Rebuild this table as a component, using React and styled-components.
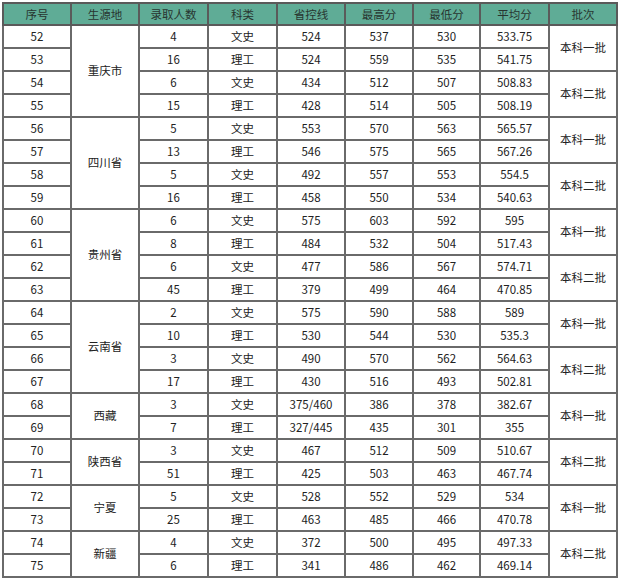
import styled, { createGlobalStyle } from 'styled-components'

const GlobalStyle = createGlobalStyle`
  body {
    margin: 0;
    background: #fff;
    font-family: "Noto Sans CJK SC", "Noto Sans", sans-serif;
  }
`

const Page = styled.div`
  padding: 2px 0 0 2px;
  width: 621px;
  height: 582px;
  box-sizing: border-box;
`

const Table = styled.table`
  border-collapse: collapse;
  table-layout: fixed;
  width: 614px;
  font-size: 11.5px;
  color: #222;
`

const Head = styled.th`
  background: #5fac96;
  font-weight: normal;
  height: 20px;
  padding: 0;
  border: 2px solid #5a5a5a;
  color: #283530;
`

const Cell = styled.td`
  border: 2px solid #6a6a6a;
  height: 21px;
  padding: 0;
  text-align: center;
  line-height: 1;
`

const widths = [68, 68, 69, 69, 68, 68, 67, 69, 68]
const headers = ['序号', '生源地', '录取人数', '科类', '省控线', '最高分', '最低分', '平均分', '批次']

const rows = [
  [52, 4, '文史', '524', 537, 530, '533.75'],
  [53, 16, '理工', '524', 559, 535, '541.75'],
  [54, 6, '文史', '434', 512, 507, '508.83'],
  [55, 15, '理工', '428', 514, 505, '508.19'],
  [56, 5, '文史', '553', 570, 563, '565.57'],
  [57, 13, '理工', '546', 575, 565, '567.26'],
  [58, 5, '文史', '492', 557, 553, '554.5'],
  [59, 16, '理工', '458', 550, 534, '540.63'],
  [60, 6, '文史', '575', 603, 592, '595'],
  [61, 8, '理工', '484', 532, 504, '517.43'],
  [62, 6, '文史', '477', 586, 567, '574.71'],
  [63, 45, '理工', '379', 499, 464, '470.85'],
  [64, 2, '文史', '575', 590, 588, '589'],
  [65, 10, '理工', '530', 544, 530, '535.3'],
  [66, 3, '文史', '490', 570, 562, '564.63'],
  [67, 17, '理工', '430', 516, 493, '502.81'],
  [68, 3, '文史', '375/460', 386, 378, '382.67'],
  [69, 7, '理工', '327/445', 435, 301, '355'],
  [70, 3, '文史', '467', 512, 509, '510.67'],
  [71, 51, '理工', '425', 503, 463, '467.74'],
  [72, 5, '文史', '528', 552, 529, '534'],
  [73, 25, '理工', '463', 485, 466, '470.78'],
  [74, 4, '文史', '372', 500, 495, '497.33'],
  [75, 6, '理工', '341', 486, 462, '469.14'],
]

// region starts: index -> [name, span]
const regions = {
  0: ['重庆市', 4],
  4: ['四川省', 4],
  8: ['贵州省', 4],
  12: ['云南省', 4],
  16: ['西藏', 2],
  18: ['陕西省', 2],
  20: ['宁夏', 2],
  22: ['新疆', 2],
}

const batchName = (i) => {
  if (i < 16) return i % 4 === 0 ? '本科一批' : '本科二批'
  if (i === 16 || i === 20) return '本科一批'
  return '本科二批'
}

export default function App() {
  return (
    <Page>
      <GlobalStyle />
      <Table>
        <colgroup>
          {widths.map((w, i) => <col key={i} style={{ width: w }} />)}
        </colgroup>
        <thead>
          <tr>
            {headers.map(h => <Head key={h}>{h}</Head>)}
          </tr>
        </thead>
        <tbody>
          {rows.map((r, i) => (
            <tr key={r[0]}>
              <Cell>{r[0]}</Cell>
              {regions[i] && <Cell rowSpan={regions[i][1]}>{regions[i][0]}</Cell>}
              <Cell>{r[1]}</Cell>
              <Cell>{r[2]}</Cell>
              <Cell>{r[3]}</Cell>
              <Cell>{r[4]}</Cell>
              <Cell>{r[5]}</Cell>
              <Cell>{r[6]}</Cell>
              {i % 2 === 0 && <Cell rowSpan={2}>{batchName(i)}</Cell>}
            </tr>
          ))}
        </tbody>
      </Table>
    </Page>
  )
}
